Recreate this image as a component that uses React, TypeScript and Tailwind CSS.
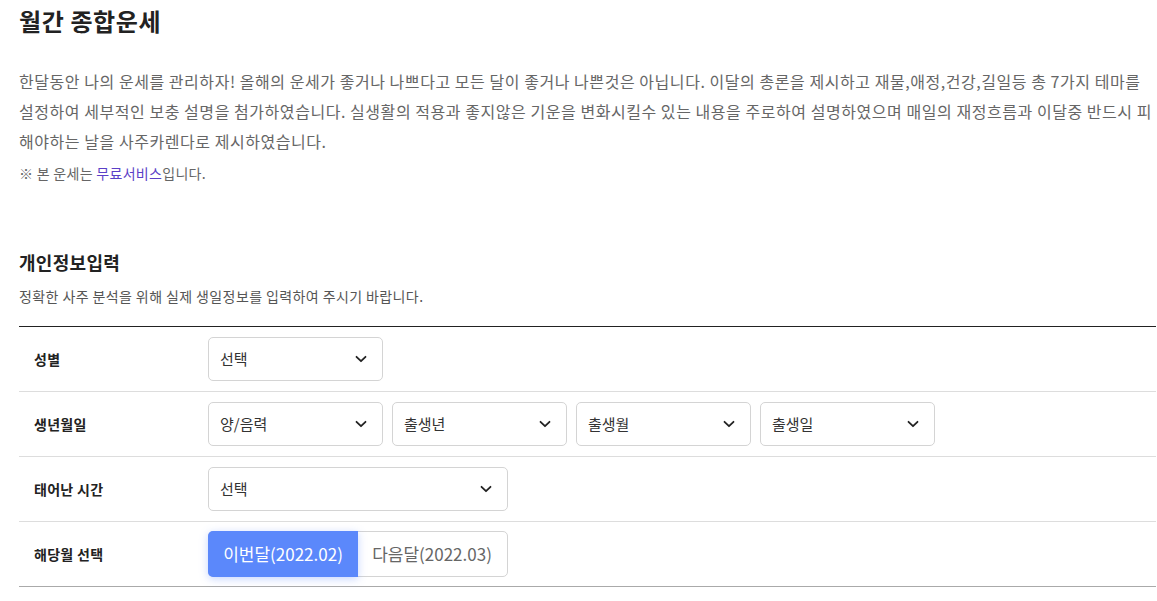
import React from "react";

const font = { fontFamily: '"Noto Sans CJK KR", "Noto Sans", sans-serif' };

function Chevron() {
  return (
    <svg width="14" height="14" viewBox="0 0 14 14" fill="none">
      <path d="M2.5 4.8 L7 9.2 L11.5 4.8" stroke="#222" strokeWidth="1.8" strokeLinecap="round" strokeLinejoin="round" />
    </svg>
  );
}

function Select({ label, w }: { label: string; w: string }) {
  return (
    <div className={`${w} h-[44px] rounded-[5px] border border-[#d4d4d4] bg-white flex items-center justify-between pl-[11px] pr-[14px]`}>
      <span className="text-[15px] text-[#333]">{label}</span>
      <Chevron />
    </div>
  );
}

function Row({ label, children, last }: { label: string; children: React.ReactNode; last?: boolean }) {
  return (
    <div className={`flex items-center h-[65px] border-b ${last ? "border-[#aaa]" : "border-[#ddd]"}`}>
      <div className="w-[189px] pl-[15px] text-[14px] tracking-[0.3px] font-bold text-[#222]">{label}</div>
      <div className="flex gap-[9px]">{children}</div>
    </div>
  );
}

export default function App() {
  return (
    <div style={font} className="bg-white min-h-[601px] pl-[19px] pr-[1px] pt-[4px]">
      <h1 className="text-[24px] tracking-[0.6px] leading-[34px] font-bold text-[#222]">월간 종합운세</h1>
      <div className="mt-[28px] text-[16px] tracking-[0.55px] leading-[30px] text-[#666] whitespace-nowrap">
        <p>한달동안 나의 운세를 관리하자! 올해의 운세가 좋거나 나쁘다고 모든 달이 좋거나 나쁜것은 아닙니다. 이달의 총론을 제시하고 재물,애정,건강,길일등 총 7가지 테마를</p>
        <p>설정하여 세부적인 보충 설명을 첨가하였습니다. 실생활의 적용과 좋지않은 기운을 변화시킬수 있는 내용을 주로하여 설명하였으며 매일의 재정흐름과 이달중 반드시 피</p>
        <p>해야하는 날을 사주카렌다로 제시하였습니다.</p>
      </div>
      <p className="mt-[7px] text-[14px] tracking-[0.3px] leading-[20px] text-[#666]">
        ※ 본 운세는 <span className="text-[#5b3fc7]">무료서비스</span>입니다.
      </p>

      <h2 className="mt-[67px] text-[18px] tracking-[0.3px] leading-[24px] font-bold text-[#222]">개인정보입력</h2>
      <p className="mt-[12px] text-[14px] tracking-[0.4px] leading-[20px] text-[#555]">정확한 사주 분석을 위해 실제 생일정보를 입력하여 주시기 바랍니다.</p>

      <div className="mt-[20px] border-t border-[#222]">
        <Row label="성별">
          <Select label="선택" w="w-[175px]" />
        </Row>
        <Row label="생년월일">
          <Select label="양/음력" w="w-[175px]" />
          <Select label="출생년" w="w-[175px]" />
          <Select label="출생월" w="w-[175px]" />
          <Select label="출생일" w="w-[175px]" />
        </Row>
        <Row label="태어난 시간">
          <Select label="선택" w="w-[300px]" />
        </Row>
        <Row label="해당월 선택" last>
          <div className="flex w-[300px] h-[46px] rounded-[5px] border border-[#d4d4d4] bg-white">
            <div className="w-[150px] -m-px h-[46px] rounded-l-[5px] bg-[#5b88fb] text-white text-[17px] flex items-center justify-center shadow-[0_2px_8px_rgba(91,136,251,0.35)]">
              이번달(2022.02)
            </div>
            <div className="flex-1 flex items-center justify-center text-[17px] text-[#666]">다음달(2022.03)</div>
          </div>
        </Row>
      </div>
    </div>
  );
}
